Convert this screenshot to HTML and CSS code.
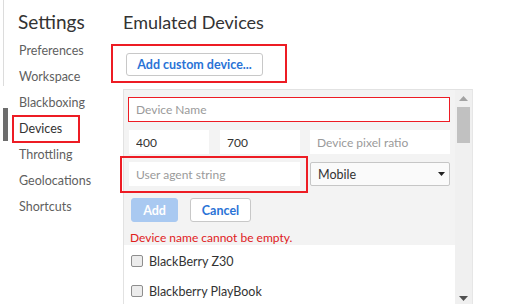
FILE: index.html
```html
<!DOCTYPE html>
<html lang="en">
<head>
  <meta charset="UTF-8">
  <title>Settings - Emulated Devices</title>
  <link rel="stylesheet" href="styles.css">
</head>
<body>

  <div class="edge">
    <div class="edge-line"></div>
    <div class="edge-thumb"></div>
  </div>

  <nav class="sidebar">
    <h1 class="sidebar-title">Settings</h1>
    <ul class="nav-list">
      <li>Preferences</li>
      <li>Workspace</li>
      <li>Blackboxing</li>
      <li class="active marked">Devices</li>
      <li>Throttling</li>
      <li>Geolocations</li>
      <li>Shortcuts</li>
    </ul>
  </nav>

  <main class="main">
    <h2 class="main-title">Emulated Devices</h2>

    <div class="add-wrap">
      <button class="btn btn-add">Add custom device...</button>
    </div>

    <div class="panel">
      <div class="panel-body">
        <div class="device-form">
          <input class="field field-name" placeholder="Device Name">
          <div class="form-row">
            <input class="field field-small" value="400">
            <input class="field field-small" value="700">
            <input class="field field-wide" placeholder="Device pixel ratio">
          </div>
          <div class="form-row">
            <div class="ua-wrap">
              <input class="field field-ua" placeholder="User agent string">
            </div>
            <div class="select">
              <span>Mobile</span>
              <svg width="7" height="4" viewBox="0 0 7 4"><path d="M0 0h7L3.5 4z" fill="#222"/></svg>
            </div>
          </div>
          <div class="form-buttons">
            <button class="btn btn-primary" disabled>Add</button>
            <button class="btn btn-cancel">Cancel</button>
          </div>
          <div class="form-error">Device name cannot be empty.</div>
        </div>

        <ul class="device-list">
          <li><span class="checkbox"></span>BlackBerry Z30</li>
          <li><span class="checkbox"></span>Blackberry PlayBook</li>
        </ul>
      </div>

      <div class="scrollbar">
        <svg class="arrow" width="9" height="5" viewBox="0 0 9 5"><path d="M4.5 0L9 5H0z" fill="#a3a3a3"/></svg>
        <div class="thumb"></div>
        <div class="track"></div>
        <svg class="arrow arrow-down" width="9" height="5" viewBox="0 0 9 5"><path d="M0 0h9L4.5 5z" fill="#505050"/></svg>
      </div>
    </div>
  </main>

</body>
</html>
```

FILE: styles.css
```css
body {
  margin: 0;
  width: 506px;
  height: 305px;
  overflow: hidden;
  display: flex;
  background: #fff;
  font-family: Lato, "Noto Sans", sans-serif;
  color: #333;
}

/* window edge on the far left */
.edge {
  width: 9px;
  display: flex;
  flex-direction: column;
}

.edge-line {
  margin-left: 3px;
  width: 1px;
  height: 86px;
  background: #dcdcdc;
}

.edge-thumb {
  margin-top: 22px;
  margin-left: 3px;
  width: 5px;
  height: 33px;
  background: #6d6d6d;
}

/* sidebar */
.sidebar {
  width: 92px;
  padding-left: 10px;
}

.sidebar-title {
  margin: 9px 0 0 -1px;
  font-size: 19px;
  font-weight: 400;
  line-height: 26px;
  color: #333;
}

.nav-list {
  list-style: none;
  margin: 3px 0 0;
  padding: 0;
}

.nav-list li {
  height: 26px;
  line-height: 26px;
  font-size: 12.5px;
  color: #5f5f5f;
}

.nav-list li.active {
  color: #333;
}

.marked {
  position: relative;
}

.marked::after {
  content: "";
  position: absolute;
  left: -7px;
  top: -1px;
  width: 64px;
  height: 24px;
  border: 2px solid #ed1c24;
}

/* main area */
.main {
  flex: 1;
}

.main-title {
  margin: 9px 0 0 12px;
  font-size: 18px;
  font-weight: 400;
  line-height: 26px;
  color: #333;
}

.add-wrap {
  margin-top: 9px;
  width: 159px;
  height: 22px;
  padding: 7px 0 6px 13px;
  border: 2px solid #ed1c24;
}

.btn {
  font-family: inherit;
  font-size: 12.5px;
  font-weight: 700;
  height: 23px;
  padding: 0;
  border: 1px solid #c8c8c8;
  border-radius: 3px;
  background: #fff;
  color: #2a73d6;
}

.btn-add {
  width: 137px;
}

/* device panel */
.panel {
  margin: 6px 0 0 12px;
  width: 348px;
  height: 214px;
  display: flex;
  border: 1px solid #e2e2e2;
  border-bottom: none;
  border-right-color: #e6e6e6;
}

.panel-body {
  flex: 1;
}

.device-form {
  background: #f3f3f3;
  padding: 7px 5px 0 4px;
  height: 148px;
}

.field {
  box-sizing: border-box;
  height: 24px;
  padding: 0 7px;
  border: none;
  background: #fff;
  font-family: inherit;
  font-size: 12px;
  color: #333;
  outline: none;
}

.field::placeholder {
  color: #9a9a9a;
}

.field-name {
  display: block;
  width: 322px;
  height: 25px;
  border: 1px solid #ed1c24;
}

.form-row {
  display: flex;
  margin-top: 8px;
  padding-left: 1px;
}

.field-small {
  width: 80px;
  margin-right: 11px;
}

.field-small + .field-small {
  margin-right: 10px;
}

.field-wide {
  width: 140px;
}

.ua-wrap {
  position: relative;
  margin-right: 10px;
}

.ua-wrap::after {
  content: "";
  position: absolute;
  left: -9px;
  top: -6px;
  right: -8px;
  bottom: -7px;
  border: 2px solid #ed1c24;
}

.field-ua {
  display: block;
  width: 171px;
}

.select {
  box-sizing: border-box;
  width: 140px;
  height: 24px;
  display: flex;
  align-items: center;
  justify-content: space-between;
  padding: 0 4px 0 7px;
  border: 1px solid #c6c6c6;
  border-radius: 2px;
  background: #fafafa;
  font-size: 12.5px;
  color: #333;
}

.form-buttons {
  display: flex;
  gap: 12px;
  margin-top: 12px;
  padding-left: 3px;
}

.btn-primary {
  width: 47px;
  height: 24px;
  border-color: #a9c9f1;
  background: #a9c9f1;
  color: #fff;
}

.btn-cancel {
  width: 61px;
  height: 24px;
}

.form-error {
  margin-top: 8px;
  padding-left: 2px;
  font-size: 12px;
  line-height: 16px;
  color: #e0201c;
}

.device-list {
  list-style: none;
  margin: 0;
  padding: 1px 0 0 7px;
}

.device-list li {
  display: flex;
  align-items: center;
  height: 30px;
  font-size: 12.5px;
  color: #333;
}

.checkbox {
  box-sizing: border-box;
  width: 12px;
  height: 12px;
  margin-right: 6px;
  border: 1px solid #8e8e8e;
  border-radius: 2px;
  background: #ececec;
}

/* scrollbar */
.scrollbar {
  width: 17px;
  display: flex;
  flex-direction: column;
  align-items: center;
  background: #f0f0f0;
}

.arrow {
  margin: 6px 0;
}

.arrow-down {
  margin: 0 0 3px;
}

.thumb {
  width: 13px;
  height: 36px;
  background: #c1c1c1;
}

.track {
  flex: 1;
}
```
